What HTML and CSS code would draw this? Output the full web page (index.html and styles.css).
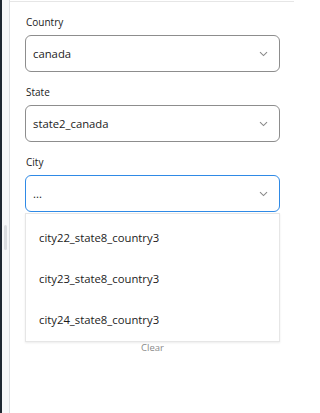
FILE: index.html
```html
<!DOCTYPE html>
<html>
<head>
<meta charset="utf-8">
<link rel="stylesheet" href="styles.css">
</head>
<body>
<div class="app">
  <div class="edge"></div>
  <div class="rail"><div class="thumb"></div></div>
  <main class="content">
    <div class="field">
      <label class="label">Country</label>
      <div class="select">
        <span class="value">canada</span>
        <svg class="chev" width="9" height="6" viewBox="0 0 9 6"><path d="M1 1.2 L4.5 4.6 L8 1.2" fill="none" stroke="#8a8a8a" stroke-width="1.1"/></svg>
      </div>
    </div>
    <div class="field">
      <label class="label">State</label>
      <div class="select">
        <span class="value">state2_canada</span>
        <svg class="chev" width="9" height="6" viewBox="0 0 9 6"><path d="M1 1.2 L4.5 4.6 L8 1.2" fill="none" stroke="#8a8a8a" stroke-width="1.1"/></svg>
      </div>
    </div>
    <div class="field city">
      <label class="label">City</label>
      <div class="select focus">
        <span class="value">...</span>
        <svg class="chev" width="9" height="6" viewBox="0 0 9 6"><path d="M1 1.2 L4.5 4.6 L8 1.2" fill="none" stroke="#8a8a8a" stroke-width="1.1"/></svg>
      </div>
      <ul class="menu">
        <li>city22_state8_country3</li>
        <li>city23_state8_country3</li>
        <li>city24_state8_country3</li>
      </ul>
      <div class="clear">Clear</div>
    </div>
  </main>
</div>
</body>
</html>
```
FILE: styles.css
```css
html, body {
  margin: 0;
  padding: 0;
  background: #ffffff;
}
body {
  font-family: "Open Sans", "Noto Sans", sans-serif;
  color: #1b1b1b;
  width: 294px;
  height: 413px;
  overflow: hidden;
}
.app {
  display: flex;
  height: 413px;
}
.edge {
  width: 2px;
  background: #1e2833;
  flex: none;
}
.rail {
  width: 7px;
  background: #f6f8fa;
  border-right: 1px solid #dcdfe3;
  flex: none;
  position: relative;
}
.thumb {
  position: absolute;
  left: 2px;
  top: 225px;
  width: 3px;
  height: 25px;
  border-radius: 2px;
  background: #dadde1;
}
.content {
  flex: 1;
  border-top: 1px solid #e6e6e6;
  margin-top: 1px;
  padding: 13px 14px 0 15px;
}
.field {
  display: flex;
  flex-direction: column;
  margin-bottom: 13px;
}
.label {
  font-size: 10px;
  line-height: 14px;
  color: #1b1b1b;
  margin-bottom: 6px;
  padding-left: 1px;
}
.select {
  height: 35px;
  border: 1px solid #8d8d8d;
  border-radius: 6px;
  display: flex;
  align-items: center;
  justify-content: space-between;
  padding: 0 11px 0 7px;
}
.select.focus {
  border-color: #2f8ae6;
}
.value {
  font-size: 11.3px;
  color: #1b1b1b;
}
.chev {
  display: block;
}
.menu {
  list-style: none;
  margin: 1px 0 0 0;
  padding: 3px 0 1px 0;
  border: 1px solid #e6e6e6;
  box-shadow: 0 1px 2px rgba(0,0,0,0.08);
  background: #fff;
}
.menu li {
  height: 41px;
  line-height: 41px;
  padding-left: 13px;
  font-size: 11.3px;
  color: #1b1b1b;
}
.clear {
  text-align: center;
  font-size: 9.5px;
  color: #8a8a8a;
  line-height: 11px;
}
```
